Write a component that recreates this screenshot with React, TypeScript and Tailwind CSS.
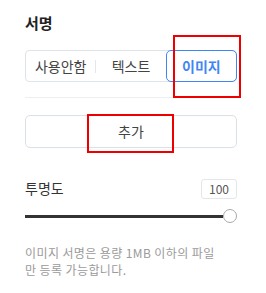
import React from "react";

export default function App() {
  return (
    <div
      className="relative w-[266px] h-[293px] bg-white pl-[25px] pr-[29px] pt-[12px]"
      style={{ fontFamily: '"Noto Sans CJK KR", "Noto Sans", sans-serif' }}
    >
      <h2 className="text-[15px] leading-[22px] font-bold text-[#222]">서명</h2>

      <div className="mt-[16px] flex h-[32px] items-center rounded-[4px] border border-[#dfe3ea] text-[14px] text-[#444]">
        <button className="flex h-full flex-1 items-center justify-center">사용안함</button>
        <span className="h-[13px] w-px bg-[#e3e6ec]" />
        <button className="flex h-full flex-1 items-center justify-center">텍스트</button>
        <button className="-my-px -mr-px flex h-[32px] flex-1 items-center justify-center rounded-[5px] border border-[#3f87f5] font-bold text-[#3f87f5]">
          이미지
        </button>
      </div>

      <div className="mt-[15px] border-t border-[#eceef2]" />

      <button className="mt-[17px] flex h-[33px] w-full items-center justify-center rounded-[5px] border border-[#dadfe8] text-[14px] text-[#444]">
        추가
      </button>

      <div className="mt-[30px] flex items-center justify-between">
        <span className="text-[14px] text-[#333]">투명도</span>
        <span className="flex h-[20px] w-[36px] items-center justify-center rounded-[3px] border border-[#e4e6ea] text-[12px] text-[#555]">
          100
        </span>
      </div>

      <div className="mt-[10px] flex h-[14px] items-center">
        <div className="h-[3px] flex-1 bg-[#333]" />
        <div className="h-[14px] w-[14px] rounded-full border border-[#aaa] bg-white" />
      </div>

      <p className="mt-[21px] text-[12px] leading-[17px] tracking-[0.4px] text-[#9a9a9a]">
        이미지 서명은 용량 1MB 이하의 파일
        <br />
        만 등록 가능합니다.
      </p>

      <div className="absolute left-[173px] top-[35px] h-[63px] w-[68px] border-2 border-[#ee0000]" />
      <div className="absolute left-[87px] top-[114px] h-[39px] w-[87px] border-2 border-[#ee0000]" />
    </div>
  );
}
